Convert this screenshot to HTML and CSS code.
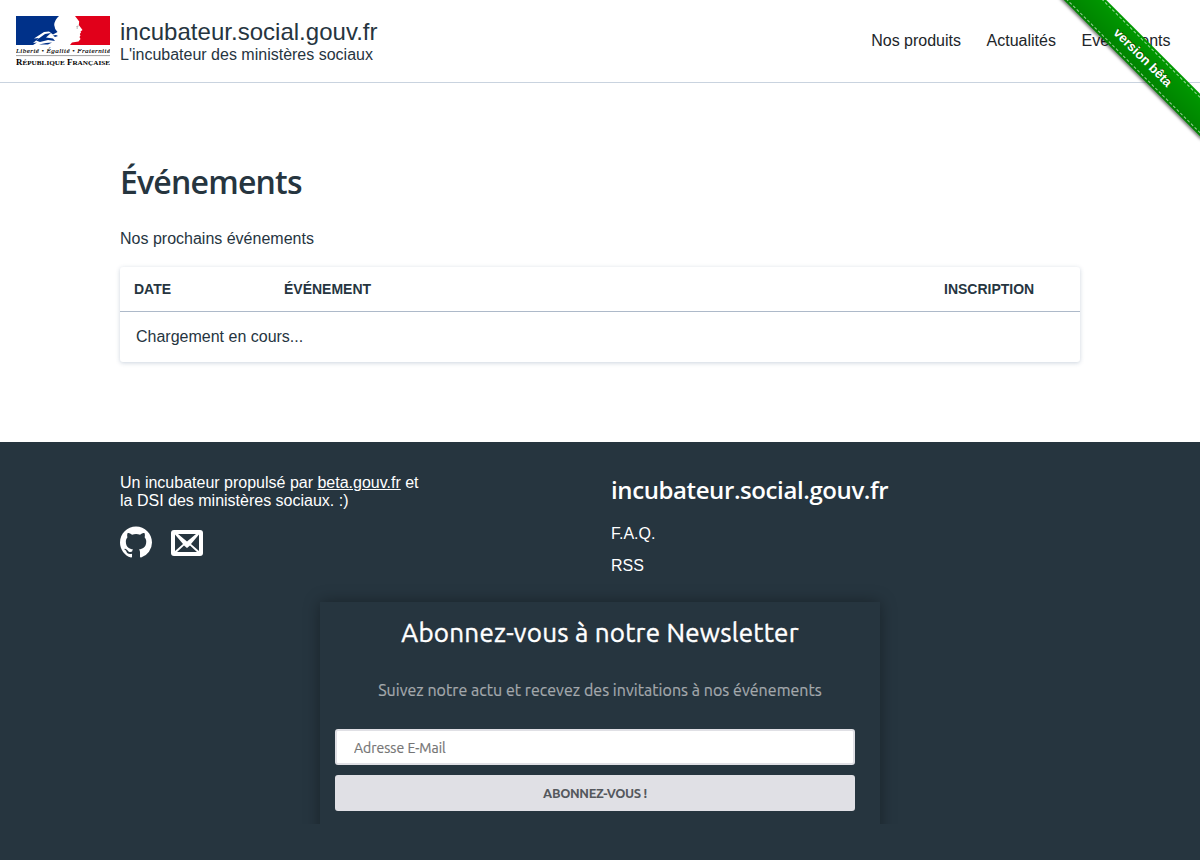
FILE: index.html
```html
<!DOCTYPE html>
<html lang="fr">
<head>
<meta charset="utf-8">
<title>Événements - incubateur.social.gouv.fr</title>
<link rel="stylesheet" href="styles.css">
</head>
<body>
<header class="header">
  <svg class="logo" viewBox="0 0 94 51" role="img" aria-label="République Française">
    <path fill="#003189" d="M0 0H43Q38.500 4 38.200 9Q38.500 13 41.500 16L37 18.500 33 15.500 28 16 18 22.500 23 22 17 27 21 26.500 17 29H0Z"/>
    <path fill="#003189" d="M20 24.500L29 18l6-1-5 4.500 7 1 2 2.500-7-1-8 2zM23 28.500l7-1.500 6-.5-4 2zM37 19.500l3-.5 2 1-3 1z"/>
    <path fill="#e1001a" d="M59 0H94V29H54L56 26.500 62.500 25.500 64.500 23 63.500 21 64.500 19.500 63.800 18 65 16.500 64.500 15.500 66.500 14 62.800 9 63.200 5.500Z"/>
    <path fill="none" stroke="#777" stroke-width=".7" d="M60.500 10.500l2-.5M60.500 12l1.500 0"/>
    <text class="logo-motto" x="0" y="37.200" textLength="94" lengthAdjust="spacing">Liberté • Égalité • Fraternité</text>
    <path stroke="#777" stroke-width=".7" d="M0 39.600H94"/>
    <text class="logo-name" x="0" y="49.200" textLength="94" lengthAdjust="spacingAndGlyphs">R<tspan class="logo-small">ÉPUBLIQUE</tspan> F<tspan class="logo-small">RANÇAISE</tspan></text>
  </svg>
  <div class="brand">
    <div class="brand-name">incubateur.social.gouv.fr</div>
    <div class="brand-tagline">L'incubateur des ministères sociaux</div>
  </div>
  <nav class="nav"><a>Nos produits</a><a>Actualités</a><a>Evénements</a></nav>
</header>
<div class="ribbon"><div class="ribbon-band"><span class="ribbon-label">version bêta</span></div></div>
<main class="main">
  <h1 class="title">Événements</h1>
  <p class="intro">Nos prochains événements</p>
  <div class="table">
    <div class="row head"><span>DATE</span><span>ÉVÉNEMENT</span><span>INSCRIPTION</span></div>
    <div class="loading">Chargement en cours...</div>
  </div>
</main>
<footer class="footer">
  <div class="columns">
    <div class="about">
      <p class="about-text">Un incubateur propulsé par <a class="link">beta.gouv.fr</a> et<br>la DSI des ministères sociaux. :)</p>
      <div class="social">
        <svg class="icon" viewBox="0 0 16 16" fill="#fff"><path d="M8 .2C3.580.2 0 3.780 0 8.200c0 3.540 2.290 6.530 5.470 7.590.4.070.55-.17.55-.38 0-.19-.01-.82-.01-1.490-2.010.37-2.530-.49-2.690-.94-.09-.23-.48-.94-.82-1.130-.28-.15-.68-.52-.01-.53.63-.01 1.080.58 1.230.82.72 1.210 1.870.87 2.330.66.07-.52.28-.87.51-1.070-1.780-.2-3.640-.89-3.640-3.950 0-.87.31-1.590.82-2.150-.08-.2-.36-1.020.08-2.120 0 0 .67-.21 2.200.82.64-.18 1.320-.27 2-.27s1.360.09 2 .27c1.530-1.040 2.200-.82 2.200-.82.44 1.100.16 1.920.08 2.120.51.56.82 1.270.82 2.150 0 3.070-1.870 3.750-3.650 3.950.29.25.54.73.54 1.480 0 1.070-.01 1.930-.01 2.200 0 .21.15.46.55.38A8.010 8.010 0 0 0 16 8.200c0-4.420-3.580-8-8-8z"/></svg>
        <svg class="icon" viewBox="0 0 32 32"><rect y="4" width="32" height="26" rx="3" fill="#fff"/><path fill="#26353f" d="M7 8H25L16 15.500zM4 8.500L12 18 4 25zM28 8.500V25L20 18zM6 26L13 19.500 16 22 19 19.500 26 26z"/></svg>
      </div>
    </div>
    <div class="site">
      <h2 class="site-title">incubateur.social.gouv.fr</h2>
      <a class="site-link">F.A.Q.</a>
      <a class="site-link">RSS</a>
    </div>
  </div>
  <div class="newsletter-clip">
    <form class="newsletter">
      <h2 class="newsletter-title">Abonnez-vous à notre Newsletter</h2>
      <p class="newsletter-text">Suivez notre actu et recevez des invitations à nos événements</p>
      <input class="email" type="email" placeholder="Adresse E-Mail">
      <button class="submit" type="button">ABONNEZ-VOUS !</button>
    </form>
  </div>
</footer>
</body>
</html>
```
FILE: styles.css
```css
* { box-sizing: border-box; }
body { margin: 0; height: 860px; overflow: hidden; display: flex; flex-direction: column; color: #26353f; background: #fff; font: 16px/18px "Liberation Sans", Arial, sans-serif; }
h1, h2, p { margin: 0; }

.header { height: 83px; flex: none; display: flex; border-bottom: 1px solid #c9d3df; padding: 16px 29.5px 0 16px; }
.logo { width: 94px; height: 51px; flex: none; }
.logo-motto { font: italic 7px "Liberation Serif", serif; fill: #000; stroke: #000; stroke-width: .15px; }
.logo-name { font: bold 8.6px "Liberation Serif", serif; fill: #000; }
.logo-small { font-size: 7px; }
.brand { margin-left: 10px; padding-top: 2px; }
.brand-name { font-size: 24px; line-height: 28px; letter-spacing: .02px; }
.nav { margin-left: auto; display: flex; gap: 25.6px; padding-top: 16px; color: #212529; }

.ribbon { position: absolute; top: 0; right: 0; width: 157px; height: 157px; overflow: hidden; font-size: 13px; }
.ribbon-band { position: absolute; top: 42px; right: -42px; width: 200px; height: 30px; padding: 2px 0; transform: rotate(45deg); background: #090 linear-gradient(to bottom, rgba(0,0,0,0), rgba(0,0,0,.15)); box-shadow: 0 2px 3px rgba(0,0,0,.5); }
.ribbon-label { display: block; height: 26px; padding: 2px 0 2px 2px; border: 1px dashed rgba(255,255,255,.6); border-width: 1px 0; color: #fff; font-weight: bold; line-height: 20px; text-align: center; text-shadow: 0 -1px rgba(0,0,0,.5); }

.main { height: 359px; flex: none; width: 960px; margin: 0 auto; padding-top: 79px; }
.title { font: 600 32px/40px "Trebuchet MS", "Open Sans", sans-serif; letter-spacing: -.8px; white-space: nowrap; }
.intro { margin-top: 28px; }
.table { margin-top: 19px; height: 95px; border-radius: 3px; box-shadow: 0 1px 4px rgba(50,85,125,.25); }
.row { display: grid; grid-template-columns: 150px 660px 1fr; padding: 13px 14px; height: 45px; border-bottom: 1px solid #adb9c9; }
.head { font-size: 14px; font-weight: bold; }
.loading { padding: 16px; }

.footer { flex: 1; background: #26353f; color: #fff; }
.columns { width: 960px; height: 160px; margin: 0 auto; display: flex; padding-top: 32px; }
.about { width: 491px; }
.link { text-decoration: underline; }
.social { display: flex; gap: 19px; margin-top: 16px; }
.icon { width: 32px; height: 32px; }
.site-title { font: 600 24px/32px "Trebuchet MS", "Open Sans", sans-serif; letter-spacing: -.4px; white-space: nowrap; }
.site-link { display: block; margin-bottom: 14px; }
.site-title + .site-link { margin-top: 19px; }
.newsletter-clip { width: 600px; height: 242px; margin: -20px auto 0; padding: 20px 20px 0; overflow: hidden; }
.newsletter { height: 250px; padding: 15px; box-shadow: 0 0 15px rgba(0,0,0,.35); font-family: Ubuntu, "Noto Sans", sans-serif; }
.newsletter-title { font-size: 26px; line-height: 32px; font-weight: 400; letter-spacing: .22px; -webkit-text-stroke: .4px #fff; text-align: center; white-space: nowrap; }
.newsletter-text { margin-top: 31px; color: #a4a9ad; font-size: 16px; letter-spacing: .04px; -webkit-text-stroke: .2px #a4a9ad; line-height: 20px; text-align: center; white-space: nowrap; }
.email, .submit { display: block; width: 520px; height: 36px; border: 2px solid #e0e0e5; border-radius: 3px; font-family: Ubuntu, "Noto Sans", sans-serif; }
.email { margin-top: 29px; padding: 2px 17px 0; font-size: 14px; background: #fff; }
.email::placeholder { color: #757575; -webkit-text-stroke: .2px #757575; }
.submit { margin-top: 10px; background: #e0e0e5; color: #55585d; font-size: 13px; font-weight: 700; letter-spacing: -.37px; }
```
